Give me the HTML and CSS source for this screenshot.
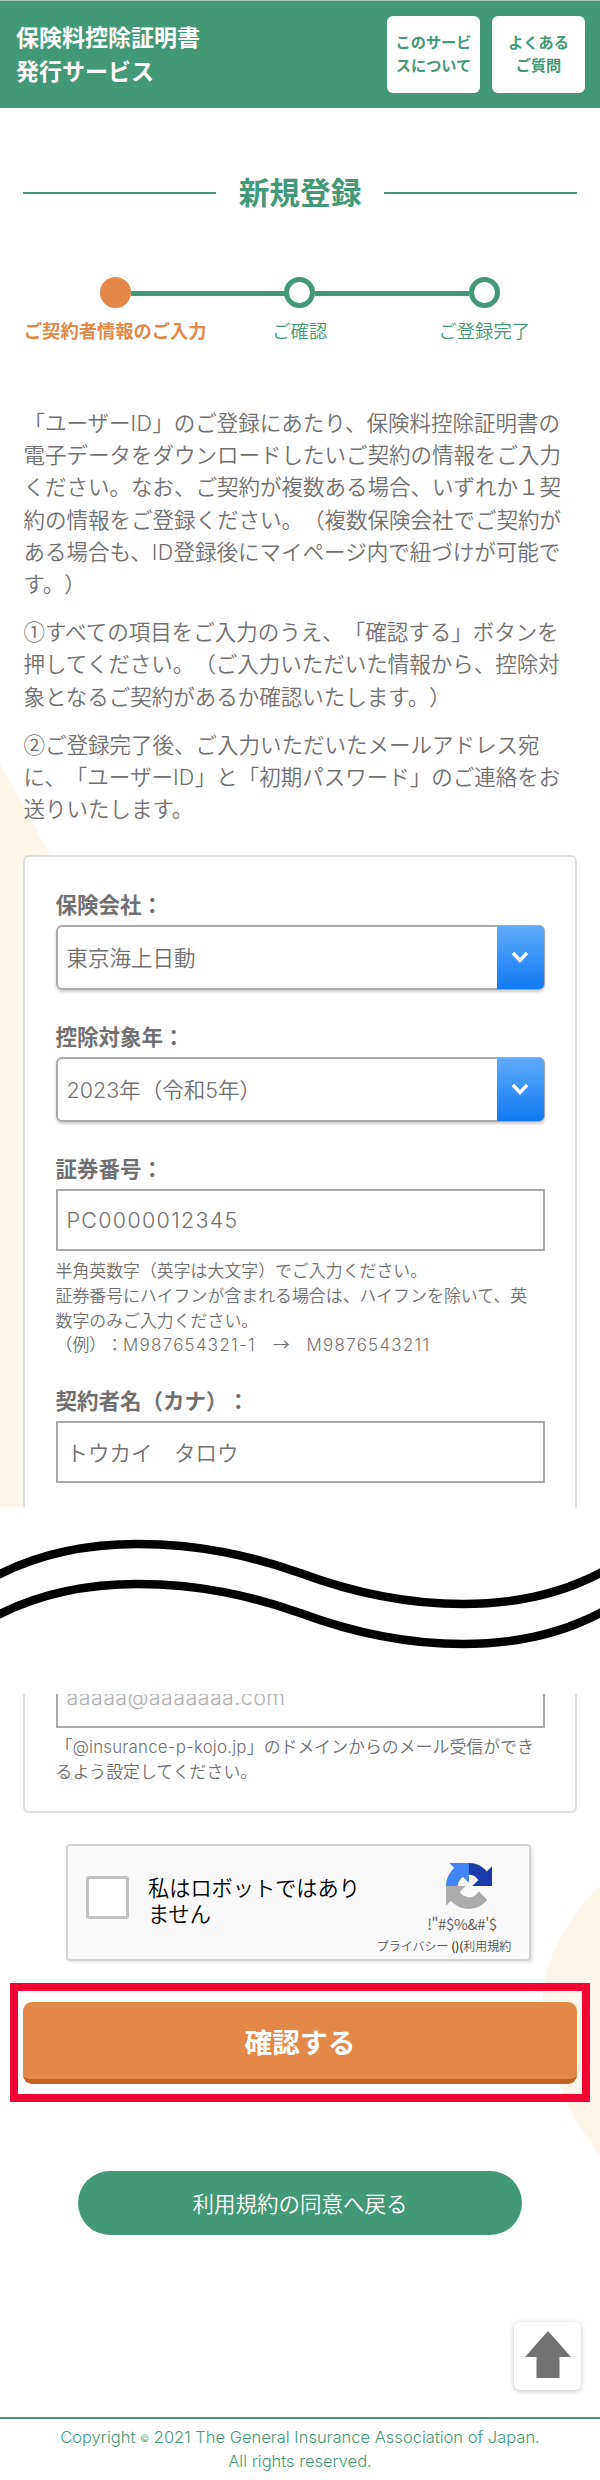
FILE: index.html
```html
<!DOCTYPE html>
<html lang="ja">
<head>
    <meta charset="UTF-8">
    <meta name="viewport" content="width=device-width, initial-scale=1.0">
    <title>新規登録 | 保険料控除証明書発行サービス</title>
    <link rel="stylesheet" href="styles.css">
</head>
<body>
    <header class="header">
        <div class="logo">保険料控除証明書<br>発行サービス</div>
        <nav class="header-nav">
            <a href="#">このサービ<br>スについて</a>
            <a href="#">よくある<br>ご質問</a>
        </nav>
    </header>

    <main>
        <section class="part-top">
            <svg class="blob" width="600" height="780" viewBox="0 0 600 780">
                <path d="M0 37 L50 128 L100 219 V780 H0 Z" fill="#fff6eb"/>
            </svg>
            <h1 class="title"><span>新規登録</span></h1>
            <ol class="steps">
                <li class="current">ご契約者情報のご入力</li>
                <li>ご確認</li>
                <li>ご登録完了</li>
            </ol>
            <div class="lead">
                <p>「ユーザー<span class="en">ID</span>」のご登録にあたり、保険料控除証明書の<br>電子データをダウンロードしたいご契約の情報をご入力<br>ください。なお、ご契約が複数ある場合、いずれか１契<br>約の情報をご登録ください。（複数保険会社でご契約が<br>ある場合も、<span class="en">ID</span>登録後にマイページ内で紐づけが可能で<br>す。）</p>
                <p>①すべての項目をご入力のうえ、「確認する」ボタンを<br>押してください。（ご入力いただいた情報から、控除対<br>象となるご契約があるか確認いたします。）</p>
                <p>②ご登録完了後、ご入力いただいたメールアドレス宛<br>に、「ユーザー<span class="en">ID</span>」と「初期パスワード」のご連絡をお<br>送りいたします。</p>
            </div>
            <form class="card card-top">
                <div class="field">
                    <label for="company">保険会社：</label>
                    <div class="select">
                        <select id="company"><option>東京海上日動</option></select>
                        <span class="select-arrow"><svg width="18" height="13" viewBox="0 0 18 13"><path d="M2 2l7 7.5L16 2" fill="none" stroke="#fff" stroke-width="3.4"/></svg></span>
                    </div>
                </div>
                <div class="field">
                    <label for="year">控除対象年：</label>
                    <div class="select">
                        <select id="year"><option>2023年（令和5年）</option></select>
                        <span class="select-arrow"><svg width="18" height="13" viewBox="0 0 18 13"><path d="M2 2l7 7.5L16 2" fill="none" stroke="#fff" stroke-width="3.4"/></svg></span>
                    </div>
                </div>
                <div class="field field-help">
                    <label for="number">証券番号：</label>
                    <input class="code" type="text" id="number" value="PC0000012345">
                    <p class="help">半角英数字（英字は大文字）でご入力ください。<br>証券番号にハイフンが含まれる場合は、ハイフンを除いて、英<br>数字のみご入力ください。<br>（例）：<span class="en">M987654321-1</span>　→　<span class="en">M9876543211</span></p>
                </div>
                <div class="field">
                    <label for="kana">契約者名（カナ）：</label>
                    <input type="text" id="kana" value="トウカイ　タロウ">
                </div>
            </form>
        </section>

        <svg class="wave" width="600" height="187" viewBox="0 0 600 187" fill="none" stroke="#000" stroke-width="8.5">
            <path d="M-4 69 C40 46 88 37 138 37 C200 37 251 49 300 66 C351 85 405 97 463 97 C513 97 562 87 604 64"/>
            <path d="M-4 109 C40 86 88 77 138 77 C200 77 251 89 300 106 C351 125 405 137 463 137 C513 137 562 127 604 104"/>
        </svg>

        <section class="part-bottom">
            <svg class="blob blob-right" width="60" height="280" viewBox="0 0 60 280">
                <path d="M60 4 C30 32 10 70 4 100 C-3 150 12 190 34 236 L60 274 Z" fill="#fff6eb"/>
            </svg>
            <div class="card card-bottom">
                <input type="text" placeholder="aaaaa@aaaaaaa.com">
                <p class="help">「<span class="en-n">@insurance-p-kojo.jp</span>」のドメインからのメール受信ができ<br>るよう設定してください。</p>
            </div>
            <div class="captcha">
                <span class="captcha-box"></span>
                <span class="captcha-text">私はロボットではあり<br>ません</span>
                <div class="captcha-brand">
                    <svg width="46" height="46" viewBox="0 0 64 64">
                        <path fill="#1c3aa9" d="M64 31.955l-.033-1.37V4.687l-7.16 7.16C50.948 4.674 42.033.093 32.05.093c-10.4 0-19.622 4.96-25.458 12.64l11.736 11.86a15.55 15.55 0 0 1 4.754-5.334c2.05-1.6 4.952-2.906 8.968-2.906.485 0 .86.057 1.135.163 4.976.393 9.288 3.14 11.828 7.124l-8.307 8.307L64 31.953"/>
                        <path fill="#4285f4" d="M31.862.094l-1.37.033H4.594l7.16 7.16C4.58 13.147 0 22.06 0 32.046c0 10.4 4.96 19.622 12.64 25.458L24.5 45.768a15.55 15.55 0 0 1-5.334-4.754c-1.6-2.05-2.906-4.952-2.906-8.968 0-.485.057-.86.163-1.135.393-4.976 3.14-9.288 7.124-11.828l8.307 8.307L31.86.095"/>
                        <path fill="#ababab" d="M.001 32.045l.033 1.37v25.898l7.16-7.16c5.86 7.173 14.774 11.754 24.76 11.754 10.4 0 19.622-4.96 25.458-12.64l-11.736-11.86a15.55 15.55 0 0 1-4.754 5.334c-2.05 1.6-4.952 2.906-8.968 2.906-.485 0-.86-.057-1.135-.163-4.976-.393-9.288-3.14-11.828-7.124l8.307-8.307c-10.522.04-22.4.066-27.295-.005"/>
                    </svg>
                    <span class="captcha-name">!"#$%&amp;#'$</span>
                    <span class="captcha-links">プライバシー <b>()(</b>利用規約</span>
                </div>
            </div>
            <div class="highlight">
                <button type="button" class="btn-confirm">確認する</button>
            </div>
            <a class="btn-back" href="#">利用規約の同意へ戻る</a>
            <a class="page-top" href="#">
                <svg width="46" height="47" viewBox="0 0 46 47"><path d="M23 0L46 26H34.500V47H11.500V26H0Z" fill="#727272"/></svg>
            </a>
        </section>
    </main>

    <footer class="footer">
        Copyright <small>©</small> 2021 The General Insurance Association of Japan.<br>
        <span>All rights reserved.</span>
    </footer>
</body>
</html>
```
FILE: styles.css
```css
*,
*::before,
*::after {
    box-sizing: border-box;
}
body {
    margin: 0;
    width: 600px;
    background-color: #fff;
    color: #707070;
    font-family: "Noto Sans CJK JP", sans-serif;
    font-size: 21.5px;
    font-weight: 350;
    line-height: 32.2px;
    text-spacing-trim: space-all;
}
p, h1, ol {
    margin: 0;
    padding: 0;
}
a {
    text-decoration: none;
}
.en {
    font-family: Inter, sans-serif;
    font-weight: 300;
    letter-spacing: 0.3px;
    line-height: 1;
}
.en-n {
    font-family: Inter, sans-serif;
    font-weight: 300;
    letter-spacing: 0.2px;
    line-height: 1;
}

/* header */
.header {
    display: flex;
    justify-content: space-between;
    height: 108px;
    padding: 15px 15px 0 16px;
    background-color: #439977;
    border-top: 1px solid #a1ccbb;
    color: #fff;
}
.logo {
    padding-top: 3px;
    font-size: 23px;
    font-weight: 700;
    line-height: 34px;
}
.header-nav {
    display: flex;
    gap: 12px;
}
.header-nav a {
    width: 93px;
    height: 77px;
    padding-top: 14px;
    border-radius: 6px;
    background-color: #fff;
    color: #439977;
    font-size: 15.2px;
    font-weight: 700;
    line-height: 23px;
    text-align: center;
}

/* upper half of the page */
.part-top {
    position: relative;
    height: 1399px;
    overflow: hidden;
}
.blob {
    position: absolute;
    left: 0;
    bottom: 0;
    z-index: -1;
}
.title {
    display: flex;
    align-items: center;
    gap: 23px;
    height: 48px;
    margin: 61px 23px 0;
    color: #439977;
    font-size: 30.7px;
    font-weight: 700;
    line-height: 44px;
}
.title span {
    padding-bottom: 4px;
}
.title::before,
.title::after {
    content: "";
    flex: 1;
    height: 2px;
    background-color: #439977;
}
.steps {
    display: grid;
    grid-template-columns: repeat(3, 184.5px);
    margin: 60px 23px 0;
    list-style: none;
    color: #439977;
    font-size: 18.3px;
    line-height: 28px;
    text-align: center;
}
.steps li {
    position: relative;
    white-space: nowrap;
}
.steps li::before {
    content: "";
    display: block;
    width: 31px;
    height: 31px;
    margin: 0 auto 8px;
    border: 5px solid #439977;
    border-radius: 50%;
}
.steps li + li::after {
    content: "";
    position: absolute;
    top: 14px;
    left: -77px;
    width: 154px;
    height: 5px;
    background-color: #439977;
}
.steps .current {
    color: #e2894a;
    font-weight: 700;
}
.steps .current::before {
    border-color: #e2894a;
    background-color: #e2894a;
}
.lead {
    margin: 62px 0 0 23.5px;
    white-space: nowrap;
}
.lead p {
    margin-bottom: 16px;
}

/* form */
.card {
    margin: 0 23px;
    padding: 0 30.5px;
    border: 2px solid #ddd;
    background-color: #fff;
}
.card-top {
    height: 700px;
    margin-top: 31px;
    padding-top: 31px;
    border-radius: 6px 6px 0 0;
}
.field {
    margin-bottom: 30px;
}
.field-help {
    margin-bottom: 27px;
}
.field label {
    display: block;
    height: 37px;
    font-weight: 700;
}
input,
select {
    display: block;
    width: 100%;
    height: 62px;
    padding: 0 9px;
    border: 2px solid #aaa;
    border-radius: 0;
    background-color: #fff;
    color: #707070;
    font-family: Inter, "Noto Sans CJK JP", sans-serif;
    font-size: 21.5px;
    font-weight: 350;
    text-spacing-trim: space-all;
    appearance: none;
}
input::placeholder {
    color: #b0b0b0;
}
.code {
    letter-spacing: 1.3px;
}
.select {
    position: relative;
    height: 65px;
    border-radius: 6px;
    box-shadow: 0 2px 3px rgba(0, 0, 0, 0.2);
}
.select select {
    height: 65px;
    border-radius: 6px;
}
.select-arrow {
    position: absolute;
    top: 1px;
    right: 1px;
    display: flex;
    align-items: center;
    justify-content: center;
    width: 47px;
    height: 63px;
    border-radius: 0 5px 5px 0;
    background: linear-gradient(#60abfb, #0f7af3);
}
.help {
    padding-top: 7px;
    font-size: 16.9px;
    line-height: 24.6px;
    white-space: nowrap;
}
.help .en {
    letter-spacing: 1.3px;
}
.wave {
    display: block;
}

/* lower half of the page */
.part-bottom {
    position: relative;
    display: flow-root;
    height: 723px;
}
.blob-right {
    left: 540px;
    top: 188px;
    bottom: auto;
}
.card-bottom {
    height: 119px;
    border-top: 0;
    border-radius: 0 0 6px 6px;
    overflow: hidden;
}
.card-bottom input {
    margin-top: -28px;
    letter-spacing: 0.4px;
}
.card-bottom .help {
    padding-top: 6px;
}
.captcha {
    display: flex;
    width: 465px;
    height: 117px;
    margin: 31px 0 0 66px;
    padding-left: 18px;
    border: 2px solid #d3d3d3;
    border-radius: 4px;
    background-color: #f9f9f9;
    box-shadow: 2px 2px 3px rgba(0, 0, 0, 0.1);
    color: #000;
}
.captcha-box {
    flex-shrink: 0;
    width: 43px;
    height: 43px;
    margin-top: 30px;
    border: 3px solid #c1c1c1;
    border-radius: 3px;
    background-color: #fff;
}
.captcha-text {
    flex-shrink: 0;
    width: 214px;
    margin: 28px 0 0 19px;
    font-size: 21.2px;
    line-height: 26px;
    white-space: nowrap;
}
.captcha-brand {
    display: flex;
    flex-direction: column;
    align-items: center;
    width: 136px;
    padding-top: 17px;
    margin-left: 14px;
    color: #555;
}
.captcha-brand svg {
    margin-left: 50px;
}
.captcha-name {
    margin: 3px 0 0 36px;
    font-size: 15.2px;
    letter-spacing: -0.4px;
    line-height: 22px;
    white-space: nowrap;
}
.captcha-links {
    margin-top: 3px;
    font-size: 12px;
    line-height: 18px;
    white-space: nowrap;
}
.captcha-links b {
    color: #000;
    font-weight: 400;
}
.highlight {
    width: 580px;
    height: 119px;
    margin: 22px 0 0 10px;
    padding: 11px 5px;
    border: 8px solid #ff0033;
}
.btn-confirm {
    display: block;
    width: 554px;
    height: 82px;
    padding: 0;
    border: 0;
    border-bottom: 5px solid #c4621f;
    border-radius: 9px;
    background-color: #e2894a;
    color: #fff;
    font-family: inherit;
    font-size: 27.7px;
    font-weight: 700;
}
.btn-back {
    display: block;
    width: 444px;
    height: 64px;
    margin: 69px 0 0 78px;
    border-radius: 32px;
    background-color: #439977;
    color: #fff;
    line-height: 63px;
    text-align: center;
}
.page-top {
    display: block;
    width: 67px;
    height: 68px;
    margin: 87px 0 0 514px;
    padding: 9px 0 0 11px;
    border-radius: 6px;
    background-color: #fff;
    box-shadow: 0 1px 5px rgba(0, 0, 0, 0.25);
}
.footer {
    height: 63px;
    padding-top: 6px;
    border-top: 2px solid #439977;
    color: #439977;
    font-family: Inter, sans-serif;
    font-size: 16.5px;
    line-height: 24px;
    text-align: center;
    white-space: nowrap;
}
.footer small {
    font-size: 10px;
    line-height: 1;
    vertical-align: 1px;
}
```
